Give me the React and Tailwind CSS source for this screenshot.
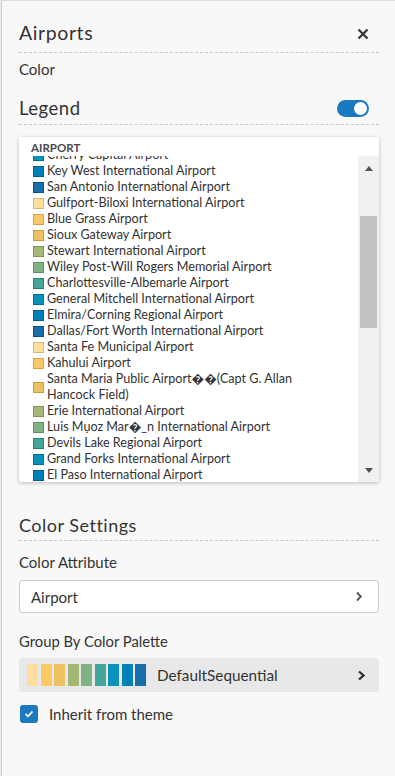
import React from "react";

const SW = [
  "bg-[#ffdf9e] border-[#d9b878]",
  "bg-[#fec964] border-[#d6a540]",
  "bg-[#eec162] border-[#c99d40]",
  "bg-[#a2b874] border-[#7e9452]",
  "bg-[#7fb286] border-[#5d8e64]",
  "bg-[#44a69a] border-[#268276]",
  "bg-[#0a93ba] border-[#007096]",
  "bg-[#0080b6] border-[#005e92]",
  "bg-[#176ea9] border-[#0a5186]",
];

const PAL = [
  "bg-[#ffdf9e]",
  "bg-[#fec964]",
  "bg-[#eec162]",
  "bg-[#a2b874]",
  "bg-[#7fb286]",
  "bg-[#44a69a]",
  "bg-[#0a93ba]",
  "bg-[#0080b6]",
  "bg-[#176ea9]",
];

const ITEMS = [
  ["Cherry Capital Airport", 6],
  ["Key West International Airport", 7],
  ["San Antonio International Airport", 8],
  ["Gulfport-Biloxi International Airport", 0],
  ["Blue Grass Airport", 1],
  ["Sioux Gateway Airport", 2],
  ["Stewart International Airport", 3],
  ["Wiley Post-Will Rogers Memorial Airport", 4],
  ["Charlottesville-Albemarle Airport", 5],
  ["General Mitchell International Airport", 6],
  ["Elmira/Corning Regional Airport", 7],
  ["Dallas/Fort Worth International Airport", 8],
  ["Santa Fe Municipal Airport", 0],
  ["Kahului Airport", 1],
  ["SANTA_MARIA", 2],
  ["Erie International Airport", 3],
  ["Luis M\u1ee5oz Mar\ufffd_n International Airport", 4],
  ["Devils Lake Regional Airport", 5],
  ["Grand Forks International Airport", 6],
  ["El Paso International Airport", 7],
];

function Row({ name, c }) {
  return (
    <div className="flex items-center">
      <div className={"w-[11px] h-[11px] border shrink-0 " + SW[c]} />
      <div className="pl-[3px] leading-[16px] whitespace-nowrap">
        {name === "SANTA_MARIA" ? (
          <>
            Santa Maria Public Airport{"\ufffd\ufffd"}(Capt G. Allan
            <br />
            Hancock Field)
          </>
        ) : (
          name
        )}
      </div>
    </div>
  );
}

export default function App() {
  return (
    <div
      className="w-[395px] h-[776px] bg-[#ededed] pl-px overflow-hidden text-[#333]"
      style={{ fontFamily: "Lato, 'Noto Sans', sans-serif" }}
    >
      <div className="h-full bg-[#f8f8f8] border-l border-t border-l-[#cccccc] border-t-[#dcdcdc] pl-[17px] pr-[16px]">
        {/* Title */}
        <div className="h-[52px] box-border border-b border-dashed border-[#c8c8c8] flex items-center pt-[13px]">
          <div className="text-[19.5px] leading-[24px] tracking-[0.6px] flex-1">Airports</div>
          <svg width="12" height="12" viewBox="0 0 12 12" className="mr-[10px] mt-[1px]">
            <path d="M1.5 1.5 L10.5 10.5 M10.5 1.5 L1.5 10.5" stroke="#333" strokeWidth="2.2" strokeLinecap="butt" />
          </svg>
        </div>
        {/* Color */}
        <div className="h-[26px] pt-[6px] text-[15px] leading-[20px]">Color</div>
        {/* Legend */}
        <div className="h-[46px] box-border border-b border-dashed border-[#c8c8c8] flex items-center pt-[13px]">
          <div className="text-[18.5px] leading-[24px] tracking-[0.5px] flex-1">Legend</div>
          <div className="w-[32px] h-[17px] rounded-full bg-[#1a79c0] flex items-center justify-end pr-[2px] mr-[10px]">
            <div className="w-[13px] h-[13px] rounded-full bg-white" />
          </div>
        </div>
        {/* Legend box */}
        <div className="mt-[12px] h-[345px] bg-white rounded-[2px] shadow-[0_1px_4px_rgba(0,0,0,0.25)] flex flex-col overflow-hidden">
          <div className="h-[19px] shrink-0 pl-[12px] pt-[3px] text-[11.5px] leading-[16px] font-bold text-[#4a4a4a] relative z-10 bg-white">
            AIRPORT
          </div>
          <div className="flex-1 flex min-h-0">
            <div className="flex-1 overflow-hidden pl-[14px] text-[12.6px]">
              <div className="mt-[-9px]">
                {ITEMS.map(([n, c], i) => (
                  <Row key={i} name={n} c={c} />
                ))}
              </div>
            </div>
            <div className="w-[21px] bg-[#f1f1f1] flex flex-col items-center">
              <div className="h-[10px]" />
              <div className="w-0 h-0 border-x-[4.5px] border-x-transparent border-b-[5px] border-b-[#505050]" />
              <div className="h-[45px]" />
              <div className="w-[17px] h-[112px] bg-[#c1c1c1]" />
              <div className="flex-1" />
              <div className="w-0 h-0 border-x-[4.5px] border-x-transparent border-t-[5px] border-t-[#505050] mb-[9px]" />
            </div>
          </div>
        </div>
        {/* Color Settings */}
        <div className="h-[59px] box-border border-b border-dashed border-[#c8c8c8] pt-[31px] text-[18px] leading-[24px] tracking-[0.5px]">
          Color Settings
        </div>
        <div className="mt-[11px] text-[15px] leading-[20px]">Color Attribute</div>
        <div className="mt-[8px] h-[33px] box-border bg-white border border-[#cccccc] rounded-[3px] flex items-center pl-[11px] pr-[15px]">
          <div className="flex-1 text-[15px] leading-[20px]">Airport</div>
          <svg width="8" height="11" viewBox="0 0 8 11">
            <path d="M2 1.5 L5.8 5.5 L2 9.5" stroke="#555" strokeWidth="1.9" fill="none" />
          </svg>
        </div>
        <div className="mt-[18px] text-[14.8px] leading-[20px]">Group By Color Palette</div>
        <div className="mt-[7px] h-[34px] bg-[#e8e8e8] rounded-[4px] flex items-center pl-[8px] pr-[13px]">
          <div className="flex gap-[2.5px]">
            {PAL.map((p, i) => (
              <div key={i} className={"w-[11px] h-[22px] " + p} />
            ))}
          </div>
          <div className="flex-1 pl-[11px] text-[15.3px] leading-[20px]">DefaultSequential</div>
          <svg width="9" height="11" viewBox="0 0 9 11">
            <path d="M2 1.5 L6.5 5.5 L2 9.5" stroke="#2b2f36" strokeWidth="2.3" fill="none" />
          </svg>
        </div>
        <div className="mt-[12px] flex items-center">
          <div className="w-[18px] h-[18px] rounded-[3px] bg-[#1a79c0] flex items-center justify-center ml-[1px]">
            <svg width="10" height="8" viewBox="0 0 10 8">
              <path d="M1.5 4 L4 6.3 L8.5 1.5" stroke="white" strokeWidth="1.8" fill="none" />
            </svg>
          </div>
          <div className="pl-[11px] text-[15px] leading-[20px]">Inherit from theme</div>
        </div>
      </div>
    </div>
  );
}
